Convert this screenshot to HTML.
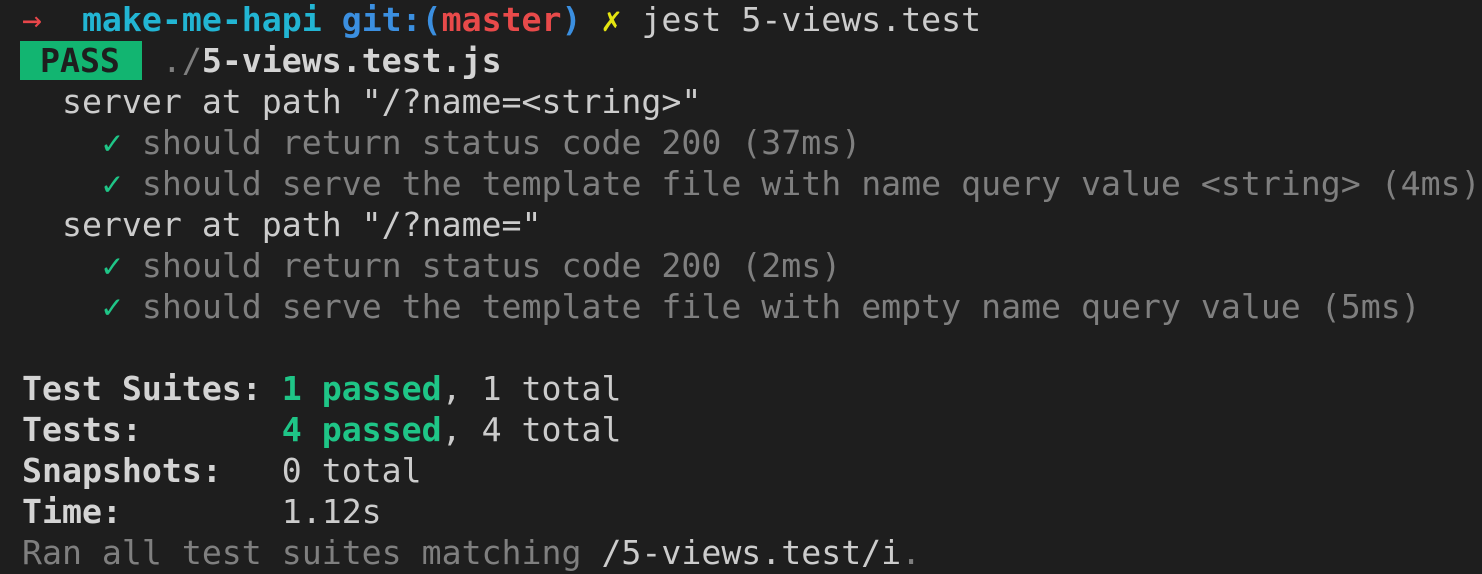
<!DOCTYPE html>
<html><head><meta charset="utf-8"><style>
html,body{margin:0;padding:0;background:#1e1e1e;width:1482px;height:574px;overflow:hidden}
pre{margin:-1px 0 0 0;padding:0 0 0 22px;font-family:"DejaVu Sans Mono","Liberation Mono",monospace;font-size:33.2px;line-height:41px;color:#cccccc;white-space:pre}
.r{color:#e8464a}.c{color:#22b5d3;font-weight:bold}.b{color:#3b8fe0;font-weight:bold}.m{color:#e84a4a;font-weight:bold}.y{color:#e5e510}
.d{color:#7f7f7f}.g{color:#1fc587}.gb{color:#1fc587;font-weight:bold}.w{font-weight:bold;color:#d4d4d4}
.pass{background:#12b571;color:#1e1e1e;font-weight:bold;display:inline-block;padding:0 2px 0 0;margin-left:-2px;line-height:39px}
</style></head><body><pre><span class="r">→</span>  <span class="c">make-me-hapi</span> <span class="b">git:(</span><span class="m">master</span><span class="b">)</span> <span class="y">✗</span> jest 5-views.test
<span class="pass"> PASS </span> <span class="d">./</span><span class="w">5-views.test.js</span>
  server at path "/?name=&lt;string&gt;"
    <span class="g">✓</span> <span class="d">should return status code 200 (37ms)</span>
    <span class="g">✓</span> <span class="d">should serve the template file with name query value &lt;string&gt; (4ms)</span>
  server at path "/?name="
    <span class="g">✓</span> <span class="d">should return status code 200 (2ms)</span>
    <span class="g">✓</span> <span class="d">should serve the template file with empty name query value (5ms)</span>

<span class="w">Test Suites: </span><span class="gb">1 passed</span>, 1 total
<span class="w">Tests:       </span><span class="gb">4 passed</span>, 4 total
<span class="w">Snapshots:   </span>0 total
<span class="w">Time:        </span>1.12s
<span class="d">Ran all test suites matching </span>/5-views.test/i<span class="d">.</span></pre></body></html>
